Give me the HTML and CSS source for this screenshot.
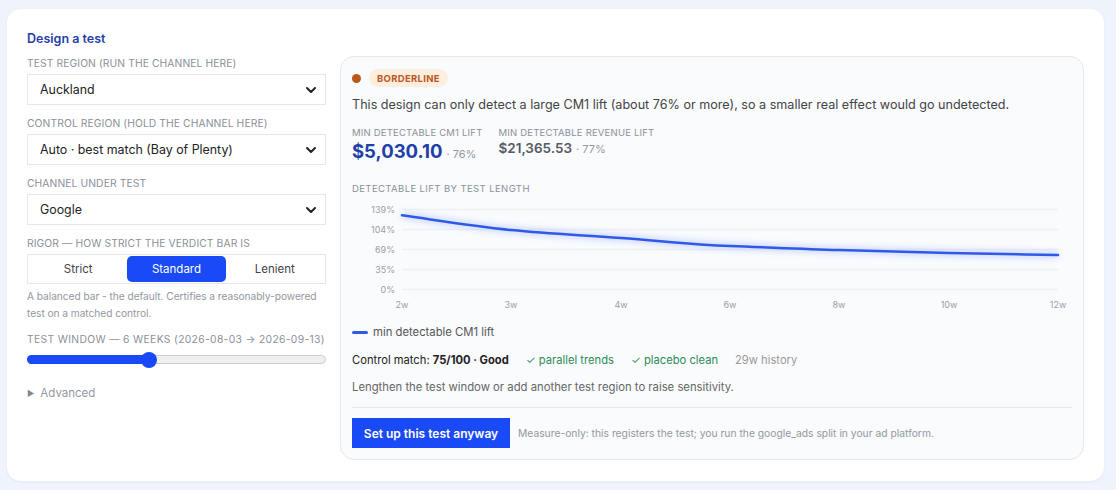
FILE: index.html
```html
<!DOCTYPE html>
<html>
<head>
<meta charset="utf-8">
<link rel="stylesheet" href="styles.css">
</head>
<body>
<div class="card">
  <h2 class="title">Design a test</h2>
  <div class="cols">
    <div class="left">
      <div class="field">
        <div class="label">Test region (run the channel here)</div>
        <div class="select"><span>Auckland</span><svg class="chev" width="12" height="8" viewBox="0 0 12 8"><path d="M2 2l4 4 4-4" fill="none" stroke="#222" stroke-width="2" stroke-linecap="round" stroke-linejoin="round"/></svg></div>
      </div>
      <div class="field">
        <div class="label">Control region (hold the channel here)</div>
        <div class="select"><span>Auto · best match (Bay of Plenty)</span><svg class="chev" width="12" height="8" viewBox="0 0 12 8"><path d="M2 2l4 4 4-4" fill="none" stroke="#222" stroke-width="2" stroke-linecap="round" stroke-linejoin="round"/></svg></div>
      </div>
      <div class="field">
        <div class="label">Channel under test</div>
        <div class="select"><span>Google</span><svg class="chev" width="12" height="8" viewBox="0 0 12 8"><path d="M2 2l4 4 4-4" fill="none" stroke="#222" stroke-width="2" stroke-linecap="round" stroke-linejoin="round"/></svg></div>
      </div>
      <div class="field">
        <div class="label">Rigor — how strict the verdict bar is</div>
        <div class="seg">
          <div class="seg-btn">Strict</div>
          <div class="seg-btn active">Standard</div>
          <div class="seg-btn">Lenient</div>
        </div>
        <p class="help">A balanced bar - the default. Certifies a reasonably-powered test on a matched control.</p>
      </div>
      <div class="label window-label">Test window — 6 weeks (2026-08-03 → 2026-09-13)</div>
      <div class="slider">
        <div class="slider-fill"></div>
        <div class="slider-thumb"></div>
      </div>
      <div class="advanced"><span class="tri">▶</span>Advanced</div>
    </div>

    <div class="panel">
      <div class="status">
        <span class="dot"></span>
        <span class="badge">BORDERLINE</span>
      </div>
      <p class="summary">This design can only detect a large CM1 lift (about 76% or more), so a smaller real effect would go undetected.</p>
      <div class="metrics">
        <div class="metric">
          <div class="mlabel">Min detectable CM1 lift</div>
          <div class="mval"><span class="big">$5,030.10</span><span class="pct">· 76%</span></div>
        </div>
        <div class="metric second">
          <div class="mlabel">Min detectable revenue lift</div>
          <div class="mval"><span class="mid">$21,365.53</span><span class="pct">· 77%</span></div>
        </div>
      </div>
      <div class="chart-title">Detectable lift by test length</div>
      <svg class="chart" width="720" height="110" viewBox="0 0 720 110">
        <defs>
          <filter id="glow" x="-5%" y="-50%" width="110%" height="200%">
            <feGaussianBlur stdDeviation="3"/>
          </filter>
        </defs>
        <g stroke="#eef0f4" stroke-width="1.5">
          <line x1="50" y1="8.5" x2="706" y2="8.5"/>
          <line x1="50" y1="28.5" x2="706" y2="28.5"/>
          <line x1="50" y1="48.5" x2="706" y2="48.5"/>
          <line x1="50" y1="68.5" x2="706" y2="68.5"/>
          <line x1="50" y1="88.5" x2="706" y2="88.5"/>
        </g>
        <g class="ylab" text-anchor="end">
          <text x="43" y="12">139%</text>
          <text x="43" y="32">104%</text>
          <text x="43" y="52">69%</text>
          <text x="43" y="72">35%</text>
          <text x="43" y="92">0%</text>
        </g>
        <g class="xlab" text-anchor="middle">
          <text x="50" y="107">2w</text>
          <text x="159" y="107">3w</text>
          <text x="269" y="107">4w</text>
          <text x="378" y="107">6w</text>
          <text x="487" y="107">8w</text>
          <text x="597" y="107">10w</text>
          <text x="706" y="107">12w</text>
        </g>
        <path d="M50 14.3 C 90 20, 120 25, 159 29 C 200 33, 230 34, 269 37 C 310 40, 340 44, 378 45 C 420 46.5, 450 48, 487 49 C 530 50.2, 560 51, 597 52 C 640 53, 670 53.5, 706 54" fill="none" stroke="#8fa5ff" stroke-width="6" opacity="0.45" filter="url(#glow)"/>
        <path d="M50 14.3 C 90 20, 120 25, 159 29 C 200 33, 230 34, 269 37 C 310 40, 340 44, 378 45 C 420 46.5, 450 48, 487 49 C 530 50.2, 560 51, 597 52 C 640 53, 670 53.5, 706 54" fill="none" stroke="#2f5ae8" stroke-width="2.5" stroke-linecap="round"/>
      </svg>
      <div class="legend"><span class="dash"></span>min detectable CM1 lift</div>
      <div class="match">
        <span>Control match: <b>75/100 · Good</b></span>
        <span class="ok">✓ parallel trends</span>
        <span class="ok">✓ placebo clean</span>
        <span class="muted">29w history</span>
      </div>
      <p class="hint">Lengthen the test window or add another test region to raise sensitivity.</p>
      <div class="footer">
        <button class="cta">Set up this test anyway</button>
        <span class="note">Measure-only: this registers the test; you run the google_ads split in your ad platform.</span>
      </div>
    </div>
  </div>
</div>
</body>
</html>
```
FILE: styles.css
```css
* { box-sizing: border-box; }
html, body { margin: 0; }
body {
  background: #eff3fc;
  font-family: Inter, "Open Sans", sans-serif;
  color: #222;
  padding: 9px 12px 9px 7px;
  height: 490px;
}
.card {
  background: #fff;
  border-radius: 14px;
  box-shadow: 0 1px 3px rgba(30, 50, 100, 0.06);
  padding: 21px 20px 20px 20px;
  height: 472px;
}
.title {
  margin: 0 0 9px;
  font-size: 12.5px;
  line-height: 17px;
  font-weight: 600;
  color: #1f40a8;
}
.cols {
  display: flex;
  gap: 14px;
  align-items: flex-start;
}
.left {
  width: 299px;
  flex: none;
  display: flex;
  flex-direction: column;
}
.field { margin-bottom: 11px; }
.label {
  font-size: 10.3px;
  line-height: 14px;
  text-transform: uppercase;
  color: #8b9099;
  letter-spacing: 0.1px;
  margin-bottom: 4px;
  white-space: nowrap;
}
.select {
  height: 31px;
  border: 1px solid #e5e7eb;
  display: flex;
  align-items: center;
  justify-content: space-between;
  padding: 0 8px 0 12px;
  font-size: 12.4px;
  color: #222;
}
.chev { display: block; }
.seg {
  height: 30px;
  border: 1px solid #e5e7eb;
  display: flex;
  padding: 1px;
}
.seg-btn {
  flex: 1;
  display: flex;
  align-items: center;
  justify-content: center;
  font-size: 11.5px;
  color: #444;
  border-radius: 5px;
}
.seg-btn.active {
  background: #1a4af5;
  color: #fff;
}
.help {
  margin: 4px 0 0;
  font-size: 10.2px;
  line-height: 17px;
  color: #9398a0;
  letter-spacing: -0.05px;
}
.window-label { margin-top: -1px; margin-bottom: 9px; letter-spacing: 0.35px; }
.slider {
  position: relative;
  height: 9px;
  border: 1px solid #c9ccd2;
  background: #efefef;
  border-radius: 5px;
}
.slider-fill {
  width: 121px;
  height: 9px;
  margin: -1px 0 0 -1px;
  background: #1a4af5;
  border-radius: 5px;
}
.slider-thumb {
  position: absolute;
  left: 113px;
  top: -4.5px;
  width: 16px;
  height: 16px;
  border-radius: 50%;
  background: #1a4af5;
}
.advanced {
  margin-top: 21px;
  font-size: 11.5px;
  line-height: 16px;
  color: #9398a0;
  display: flex;
  align-items: center;
}
.tri { font-size: 8px; margin-right: 6px; color: #888; }

.panel {
  flex: 1;
  background: #f9fbfd;
  border: 1px solid #e4e8ee;
  border-radius: 14px;
  padding: 12px 11px 11px 11px;
  display: flex;
  flex-direction: column;
}
.status { display: flex; align-items: center; gap: 8px; height: 18px; }
.dot { width: 9px; height: 9px; border-radius: 50%; background: #b9581b; }
.badge {
  height: 18px;
  padding: 0 8px;
  border-radius: 9px;
  background: #fdeee0;
  color: #b9581b;
  font-size: 9.5px;
  font-weight: 700;
  letter-spacing: 0.3px;
  display: flex;
  align-items: center;
}
.summary {
  margin: 9px 0 0;
  font-size: 12.6px;
  line-height: 18px;
  color: #444;
}
.metrics { display: flex; gap: 16px; margin-top: 12px; }
.mlabel {
  font-size: 9.5px;
  line-height: 13px;
  text-transform: uppercase;
  color: #8b9099;
  letter-spacing: 0.2px;
}
.mval { display: flex; align-items: baseline; height: 24px; line-height: 24px; }
.big { font-size: 18.5px; font-weight: 700; color: #1f40a8; }
.pct { font-size: 11px; color: #9398a0; margin-left: 4px; }
.second .mval { line-height: 18px; }
.mid { font-size: 13.5px; font-weight: 600; color: #555a63; }
.chart-title {
  margin-top: 19px;
  font-size: 9.5px;
  line-height: 13px;
  text-transform: uppercase;
  color: #8b9099;
  letter-spacing: 0.4px;
}
.chart { display: block; margin-top: 6px; }
.ylab text, .xlab text { font-size: 9px; fill: #9a9fa8; font-family: Inter, sans-serif; }
.legend {
  margin-top: 14px;
  display: flex;
  align-items: center;
  font-size: 11.3px;
  line-height: 15px;
  color: #555;
}
.dash { width: 16px; height: 3px; border-radius: 2px; background: #2f5ae8; margin-right: 5px; }
.match {
  margin-top: 12px;
  display: flex;
  gap: 17px;
  font-size: 11.2px;
  line-height: 16px;
  color: #222;
}
.match b { font-weight: 700; }
.ok { color: #2e8a57; }
.muted { color: #999; }
.hint {
  margin: 11px 0 0;
  font-size: 11.3px;
  line-height: 16px;
  color: #666;
}
.footer {
  margin-top: 12px;
  border-top: 1px solid #e4e7ec;
  padding-top: 10px;
  display: flex;
  align-items: center;
  gap: 8px;
}
.cta {
  height: 30px;
  width: 158px;
  border: none;
  background: #1a4af5;
  color: #fff;
  font-family: inherit;
  font-size: 12px;
  font-weight: 600;
  padding: 0;
}
.note { font-size: 10.3px; color: #9398a0; }
```
